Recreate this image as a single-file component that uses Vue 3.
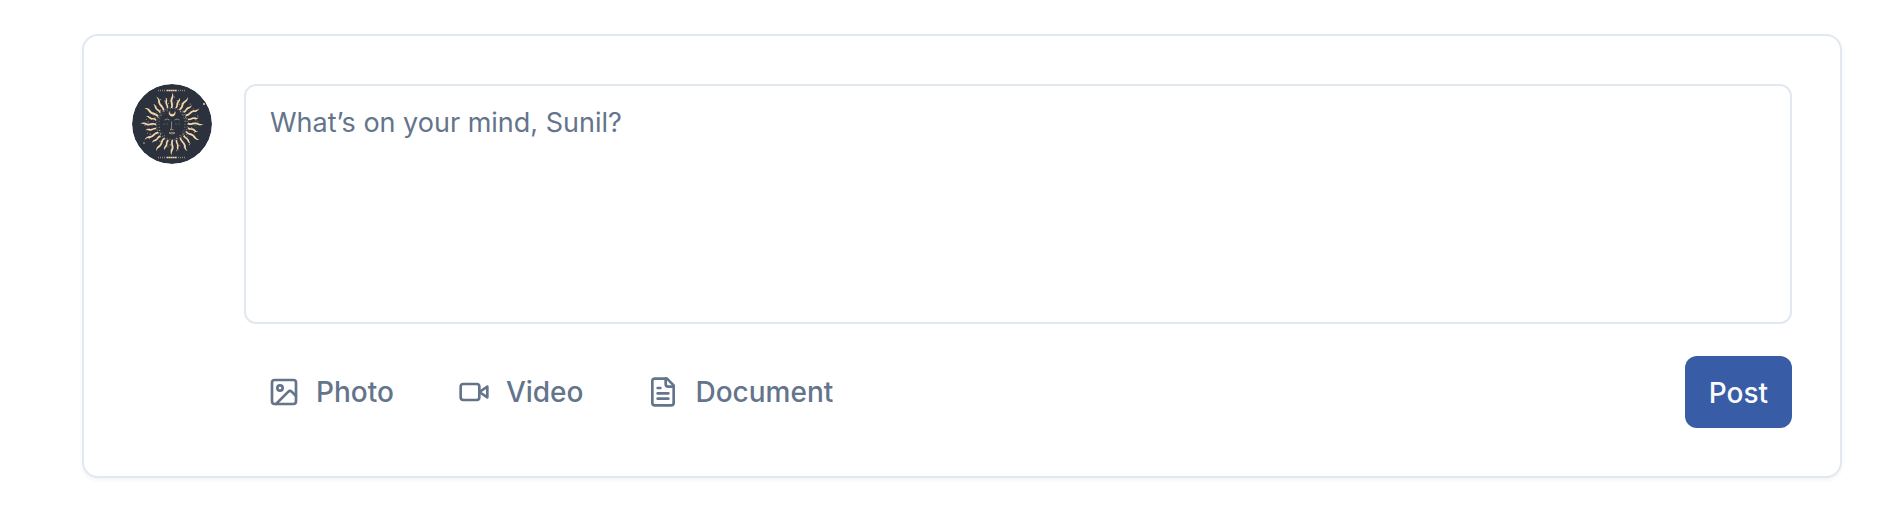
<script setup>
import { ref } from 'vue'

const draft = ref('')

const rays = Array.from({ length: 24 }, (_, i) => ({
  angle: i * 15,
  kind: i % 2 === 0 ? 'long' : 'short',
}))

const sparks = Array.from({ length: 110 }, (_, i) => {
  const a = (i * 137.5 * Math.PI) / 180
  const r = 13 + ((i * 7) % 15)
  return { x: 40 + Math.cos(a) * r, y: 40 + Math.sin(a) * r, s: 0.35 + (i % 3) * 0.15 }
})

const attachments = [
  {
    label: 'Photo',
    paths: ['M5 3h14a2 2 0 0 1 2 2v14a2 2 0 0 1-2 2H5a2 2 0 0 1-2-2V5a2 2 0 0 1 2-2z', 'M11 9a2 2 0 1 1-4 0 2 2 0 0 1 4 0z', 'm21 15-3.086-3.086a2 2 0 0 0-2.828 0L6 21'],
  },
  {
    label: 'Video',
    paths: ['m22 8-6 4 6 4V8Z', 'M4 6h10a2 2 0 0 1 2 2v8a2 2 0 0 1-2 2H4a2 2 0 0 1-2-2V8a2 2 0 0 1 2-2z'],
  },
  {
    label: 'Document',
    paths: ['M15 2H6a2 2 0 0 0-2 2v16a2 2 0 0 0 2 2h12a2 2 0 0 0 2-2V7Z', 'M14 2v4a2 2 0 0 0 2 2h4', 'M10 9H8', 'M16 13H8', 'M16 17H8'],
  },
]
</script>

<template>
  <main class="page">
    <form class="card" @submit.prevent>
      <svg class="avatar" viewBox="0 0 80 80" role="img" aria-label="Sunil">
        <circle cx="40" cy="40" r="40" fill="#2b323e" />
        <g fill="#f5d6a8">
          <path
            v-for="ray in rays"
            :key="ray.angle"
            :transform="`rotate(${ray.angle} 40 40)`"
            :d="ray.kind === 'long'
              ? 'M38.6 24C40.4 20.5 37.6 18.5 38.8 14.8C39.4 12.6 40.8 12 40 8.4C42 11 41.6 13 40.6 15.2C39.6 18 42 20 40.4 24Z'
              : 'M38.8 23.5C40.4 21 38.2 19.4 39.4 16.6C40 15.2 41 14.6 40.6 12.6C42.2 14.6 41.6 16 40.9 17.4C40 19.6 41.8 21 40.5 23.5Z'"
          />
          <circle v-for="(p, i) in sparks" :key="i" :cx="p.x" :cy="p.y" :r="p.s" opacity=".65" />
          <circle cx="72" cy="20" r="1" />
          <circle cx="12" cy="59" r=".7" />
        </g>
        <g fill="none" stroke="#f5d6a8" stroke-width=".8">
          <circle cx="40" cy="40" r="15.5" stroke-dasharray="1 1.6" opacity=".7" />
          <path d="M32.5 36q3-2 5 0M42.5 36q2.5-2 5 0M39.6 37.5v7l-1.6 1.2h3.6M37 49q3-1.4 6 0q-3 2-6 0" opacity=".65" />
          <path d="M26 6.5h28M26 73.5h28" stroke-width="1.6" stroke-dasharray="1 1" opacity=".5" />
          <path d="M35 6.5h10M35 73.5h10" stroke-width="1.4" stroke-dasharray="1.4 .6" />
          <path d="M29 31q-4 9 0 18M51 31q4 9 0 18M31.5 40h5M43.5 40h5" stroke-dasharray="1 2" opacity=".6" />
        </g>
        <path d="M37.3 27.5A3.2 3.2 0 1 0 43 27.5A2.8 2.8 0 1 1 37.3 27.5Z" fill="#ffe0b0" stroke="#ffe0b0" stroke-width=".4" />
      </svg>

      <div class="composer">
        <textarea v-model="draft" class="editor" aria-label="Post text" placeholder="What’s on your mind, Sunil?"></textarea>
        <div class="toolbar">
          <div class="attachments">
            <button v-for="item in attachments" :key="item.label" type="button" class="attach">
              <svg class="icon" viewBox="0 0 24 24" aria-hidden="true">
                <path v-for="d in item.paths" :key="d" :d="d" />
              </svg>
              <span>{{ item.label }}</span>
            </button>
          </div>
          <button type="submit" class="post">Post</button>
        </div>
      </div>
    </form>
  </main>
</template>

<style>
body {
  margin: 0;
  background: #fff;
}
</style>

<style scoped>
.page {
  padding: 34px 38px 36px 82px;
  font-family: Inter, "Liberation Sans", sans-serif;
}
.card {
  display: flex;
  align-items: flex-start;
  gap: 32px;
  padding: 48px;
  border: 2px solid #e2e8f0;
  border-radius: 16px;
  background: #fff;
  box-shadow: 0 2px 4px rgba(0, 0, 0, 0.05);
}
.avatar {
  flex: none;
  width: 80px;
  height: 80px;
  border-radius: 50%;
}
.composer {
  flex: 1;
  min-width: 0;
  display: flex;
  flex-direction: column;
  gap: 32px;
}
.editor {
  box-sizing: border-box;
  display: block;
  width: 100%;
  height: 240px;
  padding: 17px 24px;
  border: 2px solid #e2e8f0;
  border-radius: 12px;
  background: #fff;
  color: #0f172a;
  font: 400 27px/40px Inter, "Liberation Sans", sans-serif;
  resize: none;
}
.editor::placeholder {
  color: #64748b;
  opacity: 1;
}
.toolbar,
.attachments {
  display: flex;
  align-items: center;
}
.toolbar {
  justify-content: space-between;
}
.attachments {
  gap: 16px;
}
.attach,
.post {
  box-sizing: border-box;
  display: flex;
  align-items: center;
  height: 72px;
  padding: 2px 24px 0;
  border: 0;
  border-radius: 12px;
  font: 500 28px/40px Inter, "Liberation Sans", sans-serif;
  cursor: pointer;
}
.attach {
  gap: 16px;
  padding-top: 0;
  background: transparent;
  color: #64748b;
}
.post {
  background: #385ca5;
  color: #f8fafc;
}
.icon {
  flex: none;
  width: 32px;
  height: 32px;
  fill: none;
  stroke: currentColor;
  stroke-width: 2;
  stroke-linecap: round;
  stroke-linejoin: round;
}
</style>
